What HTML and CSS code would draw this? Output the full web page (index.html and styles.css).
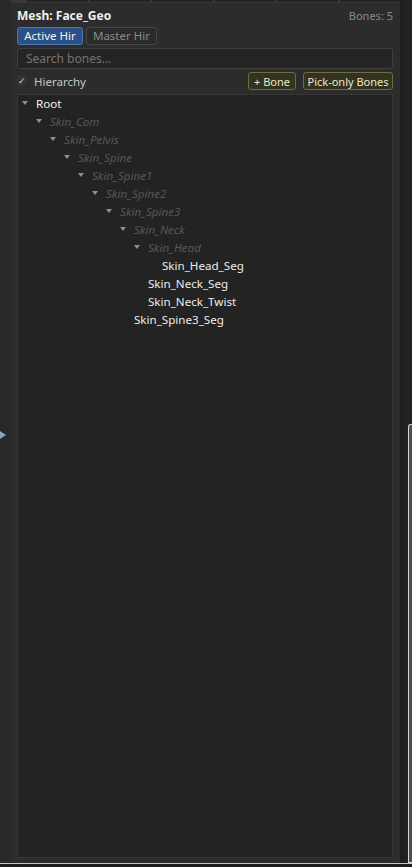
FILE: index.html
```html
<!DOCTYPE html>
<html lang="en">
<head>
    <meta charset="UTF-8">
    <meta name="viewport" content="width=device-width, initial-scale=1.0">
    <title>Bone Hierarchy</title>
    <link rel="stylesheet" href="styles.css">
</head>
<body>
    <div class="frame">
        <div class="gutter">
            <span class="expand"></span>
        </div>

        <div class="panel">
            <div class="tabstrip">
                <span></span><span></span><span></span><span></span><span></span><span></span>
            </div>

            <div class="header">
                <span class="mesh">Mesh: Face_Geo</span>
                <span class="count">Bones: 5</span>
            </div>

            <div class="modes">
                <button class="mode active">Active Hir</button>
                <button class="mode">Master Hir</button>
            </div>

            <input class="search" type="text" placeholder="Search bones...">

            <div class="toolbar">
                <label class="check"><span class="box">&#10003;</span>Hierarchy</label>
                <div class="actions">
                    <button class="act">+ Bone</button>
                    <button class="act wide">Pick-only Bones</button>
                </div>
            </div>

            <div class="tree">
                <div class="node" style="--lvl:0"><i class="tw"></i><span class="name root">Root</span></div>
                <div class="node" style="--lvl:1"><i class="tw"></i><span class="name ghost">Skin_Com</span></div>
                <div class="node" style="--lvl:2"><i class="tw"></i><span class="name ghost">Skin_Pelvis</span></div>
                <div class="node" style="--lvl:3"><i class="tw"></i><span class="name ghost">Skin_Spine</span></div>
                <div class="node" style="--lvl:4"><i class="tw"></i><span class="name ghost">Skin_Spine1</span></div>
                <div class="node" style="--lvl:5"><i class="tw"></i><span class="name ghost">Skin_Spine2</span></div>
                <div class="node" style="--lvl:6"><i class="tw"></i><span class="name ghost">Skin_Spine3</span></div>
                <div class="node" style="--lvl:7"><i class="tw"></i><span class="name ghost">Skin_Neck</span></div>
                <div class="node" style="--lvl:8"><i class="tw"></i><span class="name ghost">Skin_Head</span></div>
                <div class="node" style="--lvl:9"><i class="tw leaf"></i><span class="name">Skin_Head_Seg</span></div>
                <div class="node" style="--lvl:8"><i class="tw leaf"></i><span class="name">Skin_Neck_Seg</span></div>
                <div class="node" style="--lvl:8"><i class="tw leaf"></i><span class="name">Skin_Neck_Twist</span></div>
                <div class="node" style="--lvl:7"><i class="tw leaf"></i><span class="name">Skin_Spine3_Seg</span></div>
            </div>
        </div>

        <div class="side">
            <div class="handle"></div>
        </div>
    </div>
    <div class="bottom"></div>
</body>
</html>
```

FILE: styles.css
```css
* {
    box-sizing: border-box;
}
body {
    margin: 0;
    width: 412px;
    height: 867px;
    background: #1c1c1c;
    font-family: "Noto Sans", "Open Sans", sans-serif;
    font-size: 12px;
    color: #e6e6e6;
    overflow: hidden;
}
.frame {
    display: flex;
    height: 863px;
}
.gutter {
    width: 11px;
    background: #282828;
    display: flex;
    align-items: center;
    padding-top: 7px;
}
/* collapsed side panel arrow */
.expand {
    width: 0;
    height: 0;
    border-top: 4px solid transparent;
    border-bottom: 4px solid transparent;
    border-left: 6px solid #8ea3b3;
}
.panel {
    width: 389px;
    background: #2c2c2c;
    display: flex;
    flex-direction: column;
    padding: 0 7px 5px 6px;
}
.tabstrip {
    display: flex;
    gap: 2px;
    height: 3px;
    margin: 0 -7px 0 -6px;
    padding-left: 16px;
    background: #383838;
}
.tabstrip span {
    width: 68px;
    height: 2px;
    background: #242424;
}
.header {
    display: flex;
    justify-content: space-between;
    align-items: center;
    height: 23px;
    padding-top: 2px;
}
.mesh {
    font-weight: bold;
    font-size: 12px;
    color: #eeeeee;
}
.count {
    font-size: 11px;
    color: #8a8a8a;
}
.modes {
    display: flex;
    gap: 3px;
    height: 18px;
    margin-top: 1px;
}
button {
    font-family: inherit;
    font-size: 11.5px;
    padding: 0;
    border-radius: 3px;
    cursor: pointer;
    line-height: 1;
}
.mode {
    width: 66px;
    background: #2a2a2a;
    border: 1px solid #474747;
    color: #8a8a8a;
}
.mode + .mode {
    width: 71px;
}
.mode.active {
    background: #2b5087;
    border-color: #4b77b3;
    color: #f2f2f2;
}
.search {
    margin-top: 3px;
    height: 21px;
    width: 100%;
    background: #242424;
    border: 1px solid #3e3e3e;
    border-radius: 3px;
    padding: 0 8px;
    font-family: inherit;
    font-size: 12px;
    color: #ddd;
    outline: none;
}
.search::placeholder {
    color: #747474;
}
.toolbar {
    display: flex;
    justify-content: space-between;
    align-items: center;
    height: 18px;
    margin-top: 3px;
}
.check {
    display: flex;
    align-items: center;
    gap: 7px;
    font-size: 11.5px;
    color: #c4c4c4;
}
.box {
    width: 10px;
    height: 10px;
    background: #333;
    color: #cfcfcf;
    font-size: 9px;
    line-height: 10px;
    text-align: center;
}
.actions {
    display: flex;
    gap: 7px;
    height: 18px;
}
.act {
    width: 48px;
    background: #33321f;
    border: 1px solid #6f6c3e;
    color: #ece7c4;
    font-size: 11px;
}
.act.wide {
    width: 90px;
}
.tree {
    flex: 1;
    margin-top: 4px;
    background: #232323;
    border: 1px solid #363636;
}
.node {
    display: flex;
    align-items: center;
    height: 18px;
    margin-top: -1px;
    padding-left: calc(3px + var(--lvl) * 14px);
}
.node + .node {
    margin-top: 0;
}
.tw {
    width: 15px;
    height: 18px;
    display: flex;
    align-items: center;
}
.tw::before {
    content: "";
    border-left: 3.5px solid transparent;
    border-right: 3.5px solid transparent;
    border-top: 4px solid #8f8f8f;
    margin-left: 1px;
}
.tw.leaf::before {
    display: none;
}
.name {
    font-size: 11.6px;
    color: #ececec;
}
.root {
    color: #f2f2f2;
}
.ghost {
    font-style: italic;
    color: #575757;
}
.side {
    flex: 1;
    display: flex;
    justify-content: flex-end;
    padding-top: 424px;
    background: linear-gradient(to right, #1e1e1e 0 5px, #222 5px);
}
.handle {
    width: 4px;
    height: 100%;
    background: #4d4d4d;
    border: 1px solid #d8d8d8;
    border-right: none;
    border-radius: 3px 0 0 0;
}
.bottom {
    height: 1px;
    background: #c4c4c4;
}
```
